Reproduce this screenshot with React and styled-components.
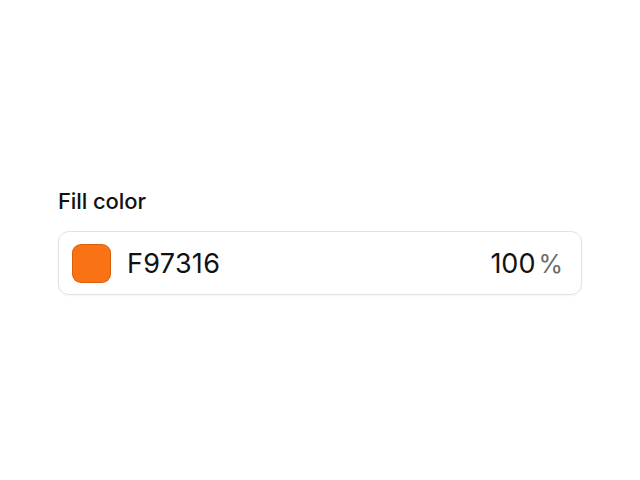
import React from 'react';
import styled, { createGlobalStyle } from 'styled-components';

const Global = createGlobalStyle`
  html, body, #root { margin: 0; height: 100%; }
  body {
    background: #fff;
    font-family: "Inter", "Liberation Sans", sans-serif;
    color: #111;
  }
`;

const Page = styled.div`
  height: 100%;
  display: flex;
  align-items: center;
  justify-content: center;
  padding: 0 58px;
  box-sizing: border-box;
`;

const Field = styled.div`
  width: 100%;
  display: flex;
  flex-direction: column;
  gap: 18px;
  margin-top: 4px;
`;

const Label = styled.label`
  font-size: 22px;
  font-weight: 500;
  color: #111;
  line-height: 24px;
  letter-spacing: -0.1px;
`;

const Box = styled.div`
  height: 64px;
  box-sizing: border-box;
  border: 1.5px solid #e2e2e4;
  border-radius: 11px;
  display: flex;
  align-items: center;
  padding: 0 18px 0 13px;
  gap: 16px;
  box-shadow: 0 1px 2px rgba(0, 0, 0, 0.05);
`;

const Swatch = styled.div`
  width: 39px;
  height: 39px;
  box-sizing: border-box;
  border-radius: 9px;
  background: ${({ color }) => color};
  border: 1px solid rgba(180, 70, 0, 0.45);
`;

const Hex = styled.span`
  flex: 1;
  font-size: 27px;
  letter-spacing: 0.3px;
  color: #111;
`;

const Alpha = styled.span`
  font-size: 27px;
  color: #111;
  display: flex;
  align-items: baseline;
  gap: 3px;
`;

const Unit = styled.span`
  color: #6b6b6b;
  font-size: 25px;
`;

export default function App() {
  return (
    <>
      <Global />
      <Page>
        <Field>
          <Label>Fill color</Label>
          <Box>
            <Swatch color="#f97316" />
            <Hex>F97316</Hex>
            <Alpha>100<Unit>%</Unit></Alpha>
          </Box>
        </Field>
      </Page>
    </>
  );
}
